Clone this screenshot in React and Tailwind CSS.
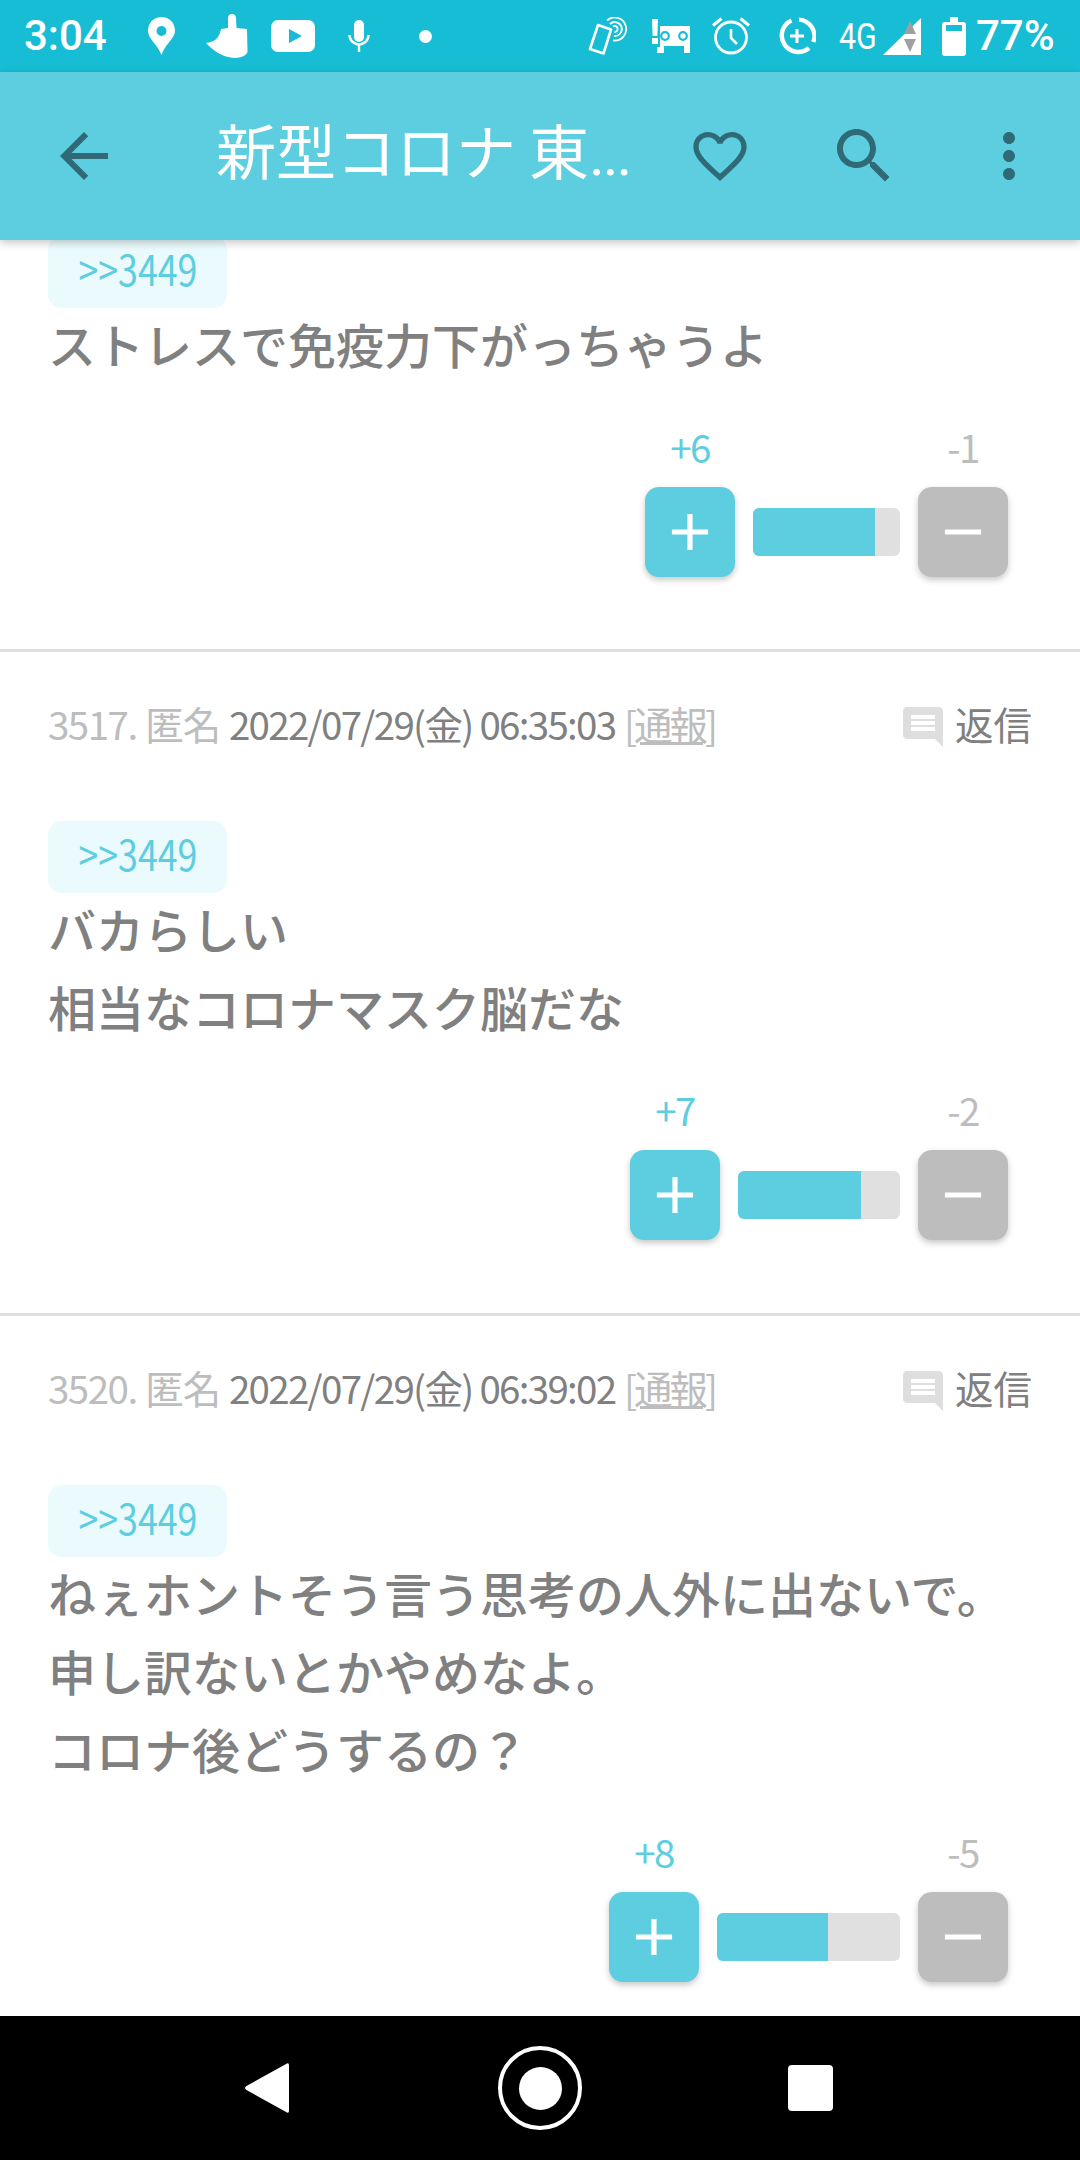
import React from "react";

const CYAN = "#5DCEDF";

const comments = [
  {
    id: 3514,
    clipped: true,
    lines: ["ストレスで免疫力下がっちゃうよ"],
    plus: 6,
    minus: 1,
    barWidth: 147,
    fillWidth: 122,
  },
  {
    id: 3517,
    date: "2022/07/29(金) 06:35:03",
    lines: ["バカらしい", "相当なコロナマスク脳だな"],
    plus: 7,
    minus: 2,
    barWidth: 162,
    fillWidth: 123,
  },
  {
    id: 3520,
    date: "2022/07/29(金) 06:39:02",
    lines: ["ねぇホントそう言う思考の人外に出ないで。", "申し訳ないとかやめなよ。", "コロナ後どうするの？"],
    plus: 8,
    minus: 5,
    barWidth: 183,
    fillWidth: 111,
  },
];

const StatusIcons = () => (
  <div className="flex h-[72px] items-center bg-[#17BDD4] pl-[24px] text-white [font-family:Roboto,sans-serif]">
    <span className="w-[82px] whitespace-nowrap text-[42px] font-medium leading-none">3:04</span>

    <svg className="ml-[42px]" width="27" height="38" viewBox="0 0 27 38" fill="white">
      <path
        fillRule="evenodd"
        d="M13.5 0C6 0 0 5.8 0 13.5c0 4.8 3 8.6 6 12.5 3 3.8 5.8 7.6 7.5 12 1.5-4.4 4-8.2 7-12 3-3.9 6.5-7.7 6.5-12.5C27 5.8 21 0 13.5 0zm0 9a5 5 0 1 1 0 10 5 5 0 0 1 0-10z"
      />
    </svg>

    <svg className="ml-[31px]" width="42" height="44" viewBox="0 0 42 44" fill="white">
      <path d="M26 0c2.5 0 4 1.5 4 4l.5 10L41 15l.5 23q-1.500 5-11.500 6Q14 44 0 29c8-1 13-4 15-14l7-1V4c0-2.500 1.500-4 4-4z" />
    </svg>

    <svg className="ml-[23px]" width="44" height="32" viewBox="0 0 44 32">
      <rect width="44" height="32" rx="7" fill="white" />
      <polygon points="18,9 31,16 18,23" fill="#17BDD4" />
    </svg>

    <svg className="ml-[33px]" width="22" height="32" viewBox="0 0 22 32" fill="none">
      <rect x="6" y="0" width="10" height="22" rx="5" fill="white" />
      <path d="M1.5 15a9.500 9.500 0 0 0 19 0M11 25v7" stroke="white" strokeWidth="2.400" />
    </svg>

    <div className="ml-[49px] h-[13px] w-[13px] rounded-full bg-white" />

    <svg className="ml-[156px]" width="40" height="38" viewBox="0 0 40 38" fill="none" stroke="white">
      <path d="M10 8 23 12.500 15.500 36.500 2 32z" strokeWidth="2.600" strokeLinejoin="round" />
      <path d="M19 3.500A11.500 11.500 0 1 1 25 23.400" strokeWidth="1.800" />
      <path d="M22 7A7 7 0 1 1 26 19" strokeWidth="1.800" />
      <path d="M25 9.500A3 3 0 1 1 26.500 15" strokeWidth="1.800" />
    </svg>

    <svg className="ml-[24px]" width="38" height="34" viewBox="0 0 38 34" fill="white">
      <path d="M0 0h6l-.6 17H.6zM0 19h6v6H0z" />
      <path d="M8 7h30v27h-6v-7H12v7H5v-6h3z" />
      <circle cx="13" cy="17" r="3.800" fill="white" stroke="#17BDD4" strokeWidth="2.200" />
      <circle cx="31" cy="17" r="3.800" fill="white" stroke="#17BDD4" strokeWidth="2.200" />
    </svg>

    <svg className="ml-[22px]" width="38" height="38" viewBox="0 0 38 38" fill="none" stroke="white">
      <circle cx="19" cy="20.500" r="15.500" strokeWidth="2.800" />
      <path d="M19 12v9l6 6" strokeWidth="2.600" />
      <path d="M1 8.500 9.500 1.500M28.500 1.500 37 8.500" strokeWidth="3" />
    </svg>

    <svg className="ml-[28px]" width="38" height="38" viewBox="0 0 38 38" fill="none" stroke="white">
      <path d="M21 2.600A16.500 16.500 0 0 1 35.300 25" strokeWidth="4.400" />
      <path d="M31 31A16.500 16.500 0 1 1 13.500 3.400" strokeWidth="4.400" />
      <path d="M12 19h14M19 12v14" strokeWidth="3" />
    </svg>

    <span className="ml-[23px] w-[38px] origin-left scale-x-[0.82] whitespace-nowrap text-[37px] leading-none">4G</span>

    <svg className="ml-[6px]" width="38" height="37" viewBox="0 0 38 37">
      <polygon points="0,37 38,0 38,37" fill="white" />
      <polygon points="27,3 33,16 21,16" fill="#A0A0A0" />
      <polygon points="21,21 33,21 27,34" fill="#A0A0A0" />
    </svg>

    <svg className="ml-[21px]" width="24" height="39" viewBox="0 0 24 39">
      <path d="M8 0h8v5h5q3 0 3 3v28q0 3-3 3H3q-3 0-3-3V8q0-3 3-3h5z" fill="white" />
      <rect x="4" y="8" width="16" height="6" fill="#17BDD4" />
    </svg>

    <span className="ml-[10px] whitespace-nowrap text-[42px] font-medium leading-none">77%</span>
  </div>
);

const AppBar = () => (
  <header className="relative z-10 flex h-[168px] items-center bg-[#5DCEDF] pl-[48px] shadow-[0_3px_8px_rgba(0,0,0,0.22)]">
    <svg width="72" height="72" viewBox="0 0 24 24" fill="#2F6A76">
      <path d="M20 11H7.830l5.590-5.590L12 4l-8 8 8 8 1.410-1.410L7.830 13H20v-2z" />
    </svg>
    <h1 className="ml-[96px] w-[472px] whitespace-nowrap pb-[2px] text-[60px] font-normal leading-none text-white [font-family:Roboto,'Noto_Sans_CJK_JP',sans-serif] [word-spacing:-2px]">
      新型コロナ 東<span className="tracking-[-2px]">...</span>
    </h1>
    <svg width="64" height="64" viewBox="0 0 24 24" fill="#2F6A76">
      <path d="M16.500 3c-1.740 0-3.410.810-4.500 2.090C10.910 3.810 9.240 3 7.500 3 4.420 3 2 5.420 2 8.500c0 3.780 3.400 6.860 8.550 11.540L12 21.350l1.450-1.320C18.600 15.360 22 12.280 22 8.500 22 5.420 19.580 3 16.500 3zm-4.400 15.550l-.1.1-.1-.1C7.140 14.240 4 11.390 4 8.500 4 6.500 5.500 5 7.500 5c1.540 0 3.040.990 3.570 2.360h1.870C13.460 5.990 14.960 5 16.500 5c2 0 3.500 1.500 3.500 3.500 0 2.890-3.140 5.740-7.900 10.050z" />
    </svg>
    <svg className="ml-[76px]" width="72" height="72" viewBox="0 0 24 24" fill="#2F6A76">
      <path d="M15.500 14h-.79l-.28-.27C15.410 12.590 16 11.110 16 9.500 16 5.910 13.090 3 9.500 3S3 5.910 3 9.500 5.910 16 9.500 16c1.610 0 3.090-.59 4.230-1.570l.27.28v.79l5 4.990L20.490 19l-4.990-5zm-6 0C7.010 14 5 11.990 5 9.500S7.010 5 9.500 5 14 7.010 14 9.500 11.990 14 9.500 14z" />
    </svg>
    <svg className="ml-[73px]" width="72" height="72" viewBox="0 0 24 24" fill="#2F6A76">
      <path d="M12 8c1.100 0 2-.9 2-2s-.9-2-2-2-2 .9-2 2 .9 2 2 2zm0 2c-1.100 0-2 .9-2 2s.9 2 2 2 2-.9 2-2-.9-2-2-2zm0 6c-1.100 0-2 .9-2 2s.9 2 2 2 2-.9 2-2-.9-2-2-2z" />
    </svg>
  </header>
);

const MetaRow = ({ id, date }) => (
  <div className="mb-[71px] flex h-[50px] items-center justify-between text-[38.5px] leading-[50px]">
    <div className="-mt-[5px] whitespace-nowrap text-[#BDBDBD]">
      <span className="tracking-[-1.5px]">{id}.</span> <span className="tracking-[-1px]">匿名</span>{" "}
      <span className="tracking-[-1.7px] text-[#808080]">{date}</span>{" "}
      <span className="tracking-[-3px] underline">[通報]</span>
    </div>
    <div className="flex items-center text-[#808080]">
      <svg className="mt-[4px]" width="48" height="48" viewBox="0 0 24 24" fill="#DEDEDE">
        <path d="M21.990 4c0-1.100-.89-2-1.990-2H4c-1.100 0-2 .9-2 2v12c0 1.100.9 2 2 2h14l4 4-.01-18zM18 14H6v-2h12v2zm0-3H6V9h12v2zm0-3H6V6h12v2z" />
      </svg>
      <span className="-mt-[5px] ml-[8px]">返信</span>
    </div>
  </div>
);

const VoteRow = ({ plus, minus, barWidth, fillWidth }) => (
  <div className="mt-[36px] flex items-end justify-end gap-[18px] pr-[24px]">
    <div className="flex w-[90px] flex-col items-center">
      <span className="-mt-[3px] mb-[14px] text-[38.5px] leading-[54px] tracking-[-1.5px] text-[#5DCEDF]">+{plus}</span>
      <button className="flex h-[90px] w-[90px] items-center justify-center rounded-[14px] bg-[#5DCEDF] shadow-[0_3px_6px_rgba(0,0,0,0.22)]">
        <svg width="62" height="62" viewBox="0 0 24 24" fill="white">
          <path d="M19 13h-6v6h-2v-6H5v-2h6V5h2v6h6v2z" />
        </svg>
      </button>
    </div>
    <div
      className="mb-[21px] h-[48px] overflow-hidden rounded-[6px] bg-[#E0E0E0]"
      style={{ width: barWidth }}
    >
      <div className="h-full" style={{ width: fillWidth, backgroundColor: CYAN }} />
    </div>
    <div className="flex w-[90px] flex-col items-center">
      <span className="-mt-[3px] mb-[14px] text-[38.5px] leading-[54px] tracking-[-1.5px] text-[#BDBDBD]">-{minus}</span>
      <button className="flex h-[90px] w-[90px] items-center justify-center rounded-[14px] bg-[#BDBDBD] shadow-[0_3px_6px_rgba(0,0,0,0.22)]">
        <svg width="62" height="62" viewBox="0 0 24 24" fill="white">
          <path d="M19 13H5v-2h14v2z" />
        </svg>
      </button>
    </div>
  </div>
);

const Comment = ({ comment }) => (
  <article
    className={
      comment.clipped
        ? "-mt-[4px] border-b-[3px] border-[#E0E0E0] px-[48px] pb-[72px]"
        : "border-b-[3px] border-[#E0E0E0] px-[48px] pb-[73px] pt-[48px]"
    }
  >
    {!comment.clipped && <MetaRow id={comment.id} date={comment.date} />}
    <div className="flex h-[72px] w-[179px] items-center justify-center rounded-[14px] bg-[#EBFAFC] pb-[8px] text-[#5DCEDF]">
      <span className="inline-block scale-x-[0.85] whitespace-nowrap text-[42px] leading-[60px]">&gt;&gt;3449</span>
    </div>
    <div className="-mt-[4px] pb-[4px] text-[48px] font-medium leading-[78px] text-[#808080]">
      {comment.lines.map((line) => (
        <div key={line}>{line}</div>
      ))}
    </div>
    <VoteRow
      plus={comment.plus}
      minus={comment.minus}
      barWidth={comment.barWidth}
      fillWidth={comment.fillWidth}
    />
  </article>
);

const NavBar = () => (
  <nav className="flex h-[144px] items-center bg-black pl-[245px]">
    <svg width="44" height="50" viewBox="0 0 44 50" fill="white">
      <path d="M42 .5q2-.8 2 2v45q0 2.800-2 2L1.500 27q-3-2 0-4z" />
    </svg>
    <div className="ml-[209px] flex h-[84px] w-[84px] items-center justify-center rounded-full border-[4px] border-white">
      <div className="h-[43px] w-[43px] rounded-full bg-white" />
    </div>
    <div className="ml-[206px] h-[46px] w-[45px] rounded-[4px] bg-white" />
  </nav>
);

export default function App() {
  return (
    <div lang="ja" className="flex h-[2160px] w-[1080px] flex-col overflow-hidden bg-white [font-family:'Noto_Sans_CJK_JP',sans-serif]">
      <StatusIcons />
      <AppBar />
      <main className="min-h-0 flex-1 overflow-hidden">
        {comments.map((comment) => (
          <Comment key={comment.id} comment={comment} />
        ))}
      </main>
      <NavBar />
    </div>
  );
}
